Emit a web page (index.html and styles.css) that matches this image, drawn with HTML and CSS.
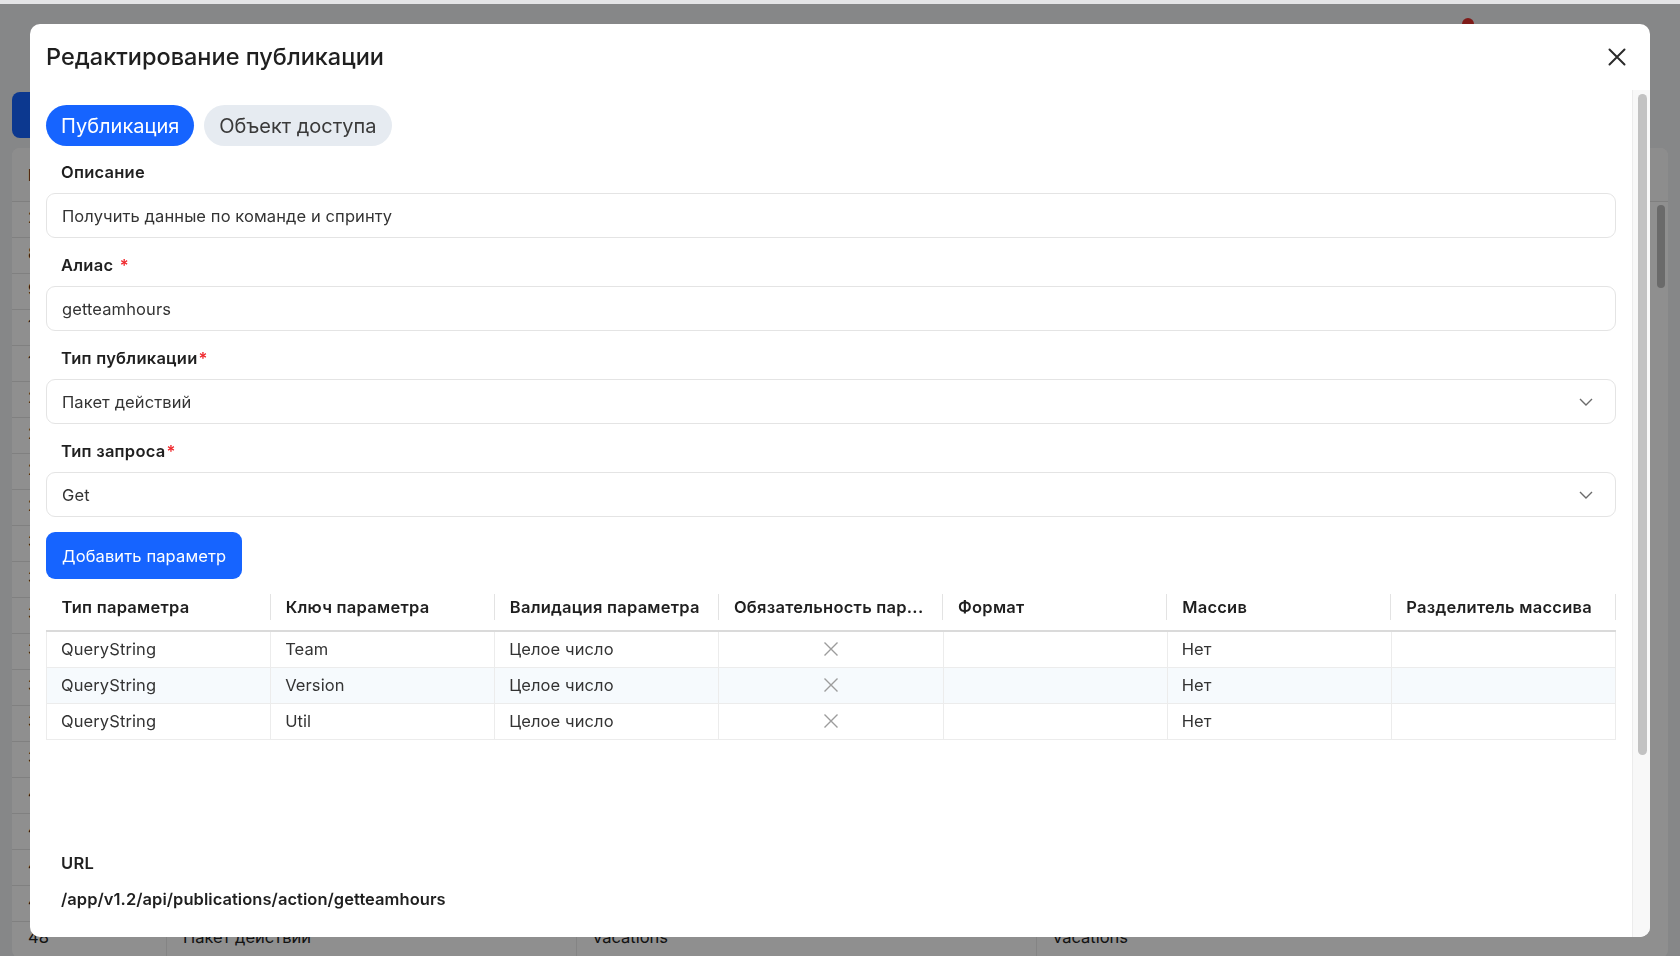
FILE: index.html
```html
<!DOCTYPE html>
<html lang="ru">
<head>
<meta charset="utf-8">
<title>Редактирование публикации</title>
<link rel="stylesheet" href="styles.css">
</head>
<body>
<div class="chrome-strip"></div>
<div class="page">
  <div class="topbar"><span class="badge-dot"></span></div>
  <div class="page-actions"><button class="page-btn">Создать</button></div>
  <div class="card">
    <div class="grid-head">
      <div class="gcell">ID</div><div class="gcell">Тип публикации</div><div class="gcell">Алиас</div><div class="gcell">Описание</div>
    </div>
    <div class="grid-body">
      <div class="grid-rows">
        <div class="grid-row"><div class="gcell">21</div><div class="gcell">Пакет действий</div><div class="gcell">teams</div><div class="gcell">teams</div></div>
        <div class="grid-row"><div class="gcell">87</div><div class="gcell">Пакет действий</div><div class="gcell">sprints</div><div class="gcell">sprints</div></div>
        <div class="grid-row"><div class="gcell">9</div><div class="gcell">Пакет действий</div><div class="gcell">users</div><div class="gcell">users</div></div>
        <div class="grid-row"><div class="gcell">14</div><div class="gcell">Пакет действий</div><div class="gcell">tasks</div><div class="gcell">tasks</div></div>
        <div class="grid-row"><div class="gcell">16</div><div class="gcell">Пакет действий</div><div class="gcell">hours</div><div class="gcell">hours</div></div>
        <div class="grid-row"><div class="gcell">22</div><div class="gcell">Пакет действий</div><div class="gcell">projects</div><div class="gcell">projects</div></div>
        <div class="grid-row"><div class="gcell">23</div><div class="gcell">Пакет действий</div><div class="gcell">roles</div><div class="gcell">roles</div></div>
        <div class="grid-row"><div class="gcell">24</div><div class="gcell">Пакет действий</div><div class="gcell">reports</div><div class="gcell">reports</div></div>
        <div class="grid-row"><div class="gcell">25</div><div class="gcell">Пакет действий</div><div class="gcell">calendar</div><div class="gcell">calendar</div></div>
        <div class="grid-row"><div class="gcell">31</div><div class="gcell">Пакет действий</div><div class="gcell">getteamhours</div><div class="gcell">getteamhours</div></div>
        <div class="grid-row"><div class="gcell">32</div><div class="gcell">Пакет действий</div><div class="gcell">budget</div><div class="gcell">budget</div></div>
        <div class="grid-row"><div class="gcell">33</div><div class="gcell">Пакет действий</div><div class="gcell">plans</div><div class="gcell">plans</div></div>
        <div class="grid-row"><div class="gcell">34</div><div class="gcell">Пакет действий</div><div class="gcell">staff</div><div class="gcell">staff</div></div>
        <div class="grid-row"><div class="gcell">35</div><div class="gcell">Пакет действий</div><div class="gcell">absences</div><div class="gcell">absences</div></div>
        <div class="grid-row"><div class="gcell">36</div><div class="gcell">Пакет действий</div><div class="gcell">workload</div><div class="gcell">workload</div></div>
        <div class="grid-row"><div class="gcell">37</div><div class="gcell">Пакет действий</div><div class="gcell">releases</div><div class="gcell">releases</div></div>
        <div class="grid-row"><div class="gcell">41</div><div class="gcell">Пакет действий</div><div class="gcell">issues</div><div class="gcell">issues</div></div>
        <div class="grid-row"><div class="gcell">42</div><div class="gcell">Пакет действий</div><div class="gcell">epics</div><div class="gcell">epics</div></div>
        <div class="grid-row"><div class="gcell">43</div><div class="gcell">Пакет действий</div><div class="gcell">boards</div><div class="gcell">boards</div></div>
        <div class="grid-row"><div class="gcell">44</div><div class="gcell">Пакет действий</div><div class="gcell">holidays</div><div class="gcell">holidays</div></div>
        <div class="grid-row"><div class="gcell">48</div><div class="gcell">Пакет действий</div><div class="gcell">vacations</div><div class="gcell">vacations</div></div>
      </div>
      <div class="page-scroll"><div class="page-thumb"></div></div>
    </div>
  </div>
</div>

<div class="overlay">
  <div class="modal">
    <div class="modal-header">
      <h2 class="modal-title">Редактирование публикации</h2>
      <button class="modal-close" aria-label="Закрыть">
        <svg width="18" height="18" viewBox="0 0 18 18"><path d="M1.5 1.5L16.5 16.5M16.5 1.5L1.5 16.5" stroke="#2b2b2b" stroke-width="2" stroke-linecap="round" fill="none"/></svg>
      </button>
    </div>
    <div class="modal-main">
      <div class="modal-body">
        <div class="tabs">
          <button class="tab active">Публикация</button>
          <button class="tab">Объект доступа</button>
        </div>

        <div class="form-item">
          <div class="form-label">Описание</div>
          <div class="input">Получить данные по команде и спринту</div>
        </div>
        <div class="form-item">
          <div class="form-label">Алиас <span class="req spaced">*</span></div>
          <div class="input">getteamhours</div>
        </div>
        <div class="form-item">
          <div class="form-label">Тип публикации<span class="req">*</span></div>
          <div class="input select">
            <span>Пакет действий</span>
            <svg class="chev" width="14" height="8" viewBox="0 0 14 8"><polyline points="1,1 7,7 13,1" fill="none" stroke="#6b6b6b" stroke-width="1.4"/></svg>
          </div>
        </div>
        <div class="form-item">
          <div class="form-label">Тип запроса<span class="req">*</span></div>
          <div class="input select">
            <span>Get</span>
            <svg class="chev" width="14" height="8" viewBox="0 0 14 8"><polyline points="1,1 7,7 13,1" fill="none" stroke="#6b6b6b" stroke-width="1.4"/></svg>
          </div>
        </div>

        <button class="btn-primary">Добавить параметр</button>

        <table class="params">
          <thead>
            <tr>
              <th>Тип параметра</th>
              <th>Ключ параметра</th>
              <th>Валидация параметра</th>
              <th>Обязательность пар...</th>
              <th>Формат</th>
              <th>Массив</th>
              <th>Разделитель массива</th>
            </tr>
          </thead>
          <tbody>
            <tr>
              <td>QueryString</td><td>Team</td><td>Целое число</td>
              <td class="center"><svg class="xmark" width="16" height="16" viewBox="0 0 16 16"><path d="M1.5 1.5L14.5 14.5M14.5 1.5L1.5 14.5" stroke="#9c9c9c" stroke-width="1.4" fill="none"/></svg></td>
              <td></td><td>Нет</td><td></td>
            </tr>
            <tr class="alt">
              <td>QueryString</td><td>Version</td><td>Целое число</td>
              <td class="center"><svg class="xmark" width="16" height="16" viewBox="0 0 16 16"><path d="M1.5 1.5L14.5 14.5M14.5 1.5L1.5 14.5" stroke="#9c9c9c" stroke-width="1.4" fill="none"/></svg></td>
              <td></td><td>Нет</td><td></td>
            </tr>
            <tr>
              <td>QueryString</td><td>Util</td><td>Целое число</td>
              <td class="center"><svg class="xmark" width="16" height="16" viewBox="0 0 16 16"><path d="M1.5 1.5L14.5 14.5M14.5 1.5L1.5 14.5" stroke="#9c9c9c" stroke-width="1.4" fill="none"/></svg></td>
              <td></td><td>Нет</td><td></td>
            </tr>
          </tbody>
        </table>

        <div class="url-block">
          <div class="url-label">URL</div>
          <div class="url-value">/app/v1.2/api/publications/action/getteamhours</div>
        </div>
      </div>
      <div class="scrolltrack"><div class="scrollthumb"></div></div>
    </div>
  </div>
</div>
</body>
</html>
```

FILE: styles.css
```css
* { box-sizing: border-box; }

html, body {
  margin: 0;
  height: 100%;
}

body {
  font-family: Inter, "Noto Sans", "Liberation Sans", sans-serif;
  background: #eff0f2;
  color: #1f1f1f;
  overflow: hidden;
}

button {
  font-family: inherit;
  cursor: pointer;
}

/* ---------- top strip ---------- */
.chrome-strip {
  height: 4px;
  background: #e4e4e6;
  position: relative;
  z-index: 5;
}

/* ---------- background page ---------- */
.page {
  padding: 0 12px;
}

.topbar {
  height: 88px;
  display: flex;
  justify-content: flex-end;
  padding: 14px 194px 0 0;
}

.badge-dot {
  width: 12px;
  height: 12px;
  border-radius: 50%;
  background: #e3302c;
}

.page-actions {
  height: 46px;
  margin-bottom: 10px;
}

.page-btn {
  height: 46px;
  width: 160px;
  border: none;
  border-radius: 8px;
  background: #1664ff;
  color: #fff;
  font-size: 16px;
}

.card {
  background: #fff;
  border-radius: 8px;
  overflow: hidden;
  font-size: 16.5px;
  color: #222;
}

.grid-head {
  display: grid;
  grid-template-columns: 154px 410px 460px 1fr;
  height: 54px;
  align-items: center;
  border-bottom: 1px solid #e2e2e2;
  background: #fbfbfb;
  font-weight: 600;
}

.grid-body {
  display: flex;
}

.grid-rows {
  flex: 1;
}

.grid-row {
  display: grid;
  grid-template-columns: 154px 410px 460px 1fr;
  height: 36px;
  align-items: center;
  border-bottom: 1px solid #e4e4e4;
}

.gcell {
  padding: 0 16px;
  white-space: nowrap;
  height: 100%;
  display: flex;
  align-items: center;
}

.grid-row .gcell {
  padding-bottom: 6px;
}

.grid-row .gcell + .gcell {
  border-left: 1px solid #ececec;
}

.page-scroll {
  width: 18px;
  padding: 3px 0 0 7px;
}

.page-thumb {
  width: 8px;
  height: 83px;
  border-radius: 4px;
  background: #bdbdbd;
}

/* ---------- overlay + modal ---------- */
.overlay {
  position: fixed;
  top: 4px;
  left: 0;
  right: 0;
  bottom: 0;
  background: rgba(0, 0, 0, 0.44);
  padding: 20px 0 0 30px;
  z-index: 2;
}

.modal {
  width: 1620px;
  height: 913px;
  background: #fff;
  border-radius: 10px;
  overflow: hidden;
  display: flex;
  flex-direction: column;
}

.modal-header {
  height: 66px;
  flex: none;
  display: flex;
  align-items: center;
  justify-content: space-between;
  padding: 0 24px 0 16px;
}

.modal-title {
  margin: 0;
  font-size: 23.5px;
  line-height: 32px;
  font-weight: 500;
  color: #1f1f1f;
}

.modal-close {
  width: 18px;
  height: 18px;
  padding: 0;
  border: none;
  background: none;
  display: flex;
}

.modal-main {
  flex: 1;
  min-height: 0;
  display: flex;
}

.modal-body {
  flex: 1;
  min-width: 0;
  padding: 15px 16px 0 16px;
  overflow: hidden;
}

.scrolltrack {
  width: 18px;
  flex: none;
  background: #f8f8f8;
  border-left: 1px solid #ececec;
  padding: 4px 3px 0 5px;
}

.scrollthumb {
  width: 9px;
  height: 661px;
  border-radius: 5px;
  background: #c2c2c2;
}

/* tabs */
.tabs {
  display: flex;
  gap: 10px;
  margin-bottom: 14px;
}

.tab {
  height: 41px;
  padding: 0 15px;
  border: none;
  border-radius: 21px;
  background: #e6ebf1;
  color: #3a3a3a;
  font-size: 20px;
}

.tab.active {
  background: #1664ff;
  color: #fff;
}

/* form */
.form-item {
  margin-bottom: 15px;
}

.form-label {
  font-size: 16.5px;
  letter-spacing: 0.25px;
  line-height: 24px;
  font-weight: 600;
  color: #1f1f1f;
  padding-left: 15px;
  margin-bottom: 9px;
}

.req {
  color: #f0282d;
  font-weight: 600;
  margin-left: 1px;
}

.req.spaced {
  margin-left: 2px;
}

.input {
  height: 45px;
  border: 1px solid #e4e4e4;
  border-radius: 9px;
  padding: 0 22px 0 15px;
  display: flex;
  align-items: center;
  justify-content: space-between;
  font-size: 16.5px;
  letter-spacing: 0.1px;
  color: #333;
}

.chev {
  flex: none;
}

/* button */
.btn-primary {
  height: 47px;
  padding: 0 16px;
  border: none;
  border-radius: 9px;
  background: #1664ff;
  color: #fff;
  font-size: 16.5px;
  letter-spacing: 0.12px;
  display: block;
  margin-bottom: 4px;
}

/* params table */
.params {
  width: 100%;
  table-layout: fixed;
  border-collapse: collapse;
  font-size: 16.5px;
}

.params th {
  height: 48px;
  padding: 0 15px;
  text-align: left;
  font-weight: 600;
  letter-spacing: 0.25px;
  color: #1f1f1f;
  white-space: nowrap;
  overflow: hidden;
  border-bottom: 2px solid #dadada;
  background: linear-gradient(#e3e3e3, #e3e3e3) right center / 1px 26px no-repeat;
}

.params td {
  height: 36px;
  padding: 0 14px;
  color: #333;
  letter-spacing: 0.1px;
  border-right: 1px solid #ececec;
  border-bottom: 1px solid #ececec;
  white-space: nowrap;
}

.params td:first-child {
  border-left: 1px solid #ececec;
}

.params tr.alt td {
  background: #f6fafd;
}

.params td.center {
  text-align: center;
}

.xmark {
  display: block;
  margin: 0 auto;
}

/* url */
.url-block {
  margin-top: 111px;
  padding-left: 15px;
}

.url-label {
  font-size: 16.5px;
  letter-spacing: 0.25px;
  line-height: 24px;
  font-weight: 600;
  color: #1f1f1f;
}

.url-value {
  margin-top: 12px;
  font-size: 16.5px;
  letter-spacing: 0.05px;
  line-height: 24px;
  font-weight: 600;
  color: #1f1f1f;
}
```
